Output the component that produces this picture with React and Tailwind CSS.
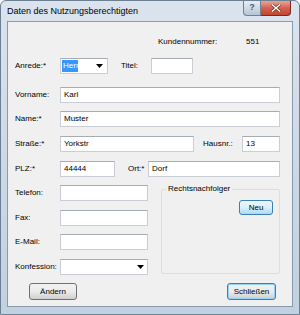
import React from "react";

const font = { fontFamily: '"Liberation Sans", Arial, sans-serif' };

const TextBox = ({ value = "", className = "" }) => (
  <div
    className={`h-[16px] bg-white border border-[#c9ced6] border-t-[#a5acb5] flex items-center pl-[3px] text-[8px] text-black ${className}`}
  >
    {value}
  </div>
);

const Arrow = () => (
  <svg width="7" height="4" viewBox="0 0 7 4" className="shrink-0">
    <path d="M0 0h7L3.5 4z" fill="#000" />
  </svg>
);

const Label = ({ children, className = "w-[45px]" }) => (
  <span className={`text-[8px] text-black shrink-0 ${className}`}>{children}</span>
);

const App = () => {
  return (
    <div
      style={font}
      className="w-[300px] h-[315px] flex flex-col rounded-t-[6px] border border-[#6d7f92] bg-gradient-to-b from-[#dbe4ee] via-[#cdd9e5] to-[#c2d1df] overflow-hidden"
    >
      {/* Titelleiste */}
      <div className="h-[20px] flex items-start shrink-0">
        <span className="text-[9px] text-black mt-[4px] ml-[6px]">
          Daten des Nutzungsberechtigten
        </span>
        <div className="ml-auto mr-[8px] flex">
          <div className="w-[18px] h-[15px] rounded-bl-[4px] border border-t-0 border-[#6f8193] bg-gradient-to-b from-[#e6edf4] via-[#cfdae5] to-[#b4c5d6] flex items-center justify-center text-[9px] font-bold text-[#4b5b6b]">
            ?
          </div>
          <div className="w-[30px] h-[15px] rounded-br-[4px] border border-l-0 border-t-0 border-[#7a2a22] bg-gradient-to-b from-[#e7a597] via-[#d4614f] to-[#c0452f] flex items-center justify-center">
            <svg width="10" height="8" viewBox="0 0 10 8">
              <path d="M1 0.5l8 7M9 0.5l-8 7" stroke="#5a1a12" strokeWidth="2.6" />
              <path d="M1 0.5l8 7M9 0.5l-8 7" stroke="#fff" strokeWidth="1.5" />
            </svg>
          </div>
        </div>
      </div>

      {/* Client-Bereich */}
      <div className="ml-[6px] w-[286px] h-[286px] bg-[#f0f0f0] border border-[#8a9aac] pl-[7px] pr-[12px] pt-[12px] flex flex-col">
        <div className="h-[16px] flex items-center">
          <span className="text-[8px] text-black ml-[143px] w-[88px]">Kundennummer:</span>
          <span className="text-[8px] text-black">551</span>
        </div>

        <div className="h-[16px] mt-[8px] flex items-center">
          <Label>Anrede:*</Label>
          <div className="w-[48px] h-[16px] bg-white border border-[#c9ced6] border-t-[#a5acb5] flex items-center pl-[1px] pr-[4px]">
            <span className="bg-[#3399ff] text-white text-[8px] px-[1px] h-[12px] leading-[12px] w-[16px]">
              Herr
            </span>
            <span className="ml-auto">
              <Arrow />
            </span>
          </div>
          <Label className="ml-[13px] w-[30px]">Titel:</Label>
          <TextBox className="w-[42px]" />
        </div>

        <div className="h-[16px] mt-[13px] flex items-center">
          <Label>Vorname:</Label>
          <TextBox value="Karl" className="flex-1" />
        </div>

        <div className="h-[16px] mt-[8px] flex items-center">
          <Label>Name:*</Label>
          <TextBox value="Muster" className="flex-1" />
        </div>

        <div className="h-[16px] mt-[9px] flex items-center">
          <Label>Straße:*</Label>
          <TextBox value="Yorkstr" className="w-[134px]" />
          <Label className="ml-[9px] w-[39px]">Hausnr.:</Label>
          <TextBox value="13" className="flex-1" />
        </div>

        <div className="h-[16px] mt-[9px] flex items-center">
          <Label>PLZ:*</Label>
          <TextBox value="44444" className="w-[55px]" />
          <Label className="ml-[13px] w-[20px]">Ort:*</Label>
          <TextBox value="Dorf" className="flex-1" />
        </div>

        <div className="mt-[6px] flex items-start">
          <div className="flex flex-col pt-[2px] w-[140px]">
            <div className="h-[16px] flex items-center">
              <Label>Telefon:</Label>
              <TextBox className="w-[88px]" />
            </div>
            <div className="h-[16px] mt-[9px] flex items-center">
              <Label>Fax:</Label>
              <TextBox className="w-[88px]" />
            </div>
            <div className="h-[16px] mt-[8px] flex items-center">
              <Label>E-Mail:</Label>
              <TextBox className="w-[88px]" />
            </div>
            <div className="h-[16px] mt-[9px] flex items-center">
              <Label>Konfession:</Label>
              <div className="w-[88px] h-[16px] bg-white border border-[#c9ced6] border-t-[#a5acb5] flex items-center justify-end pr-[3px]">
                <Arrow />
              </div>
            </div>
          </div>

          <div className="relative flex-1 ml-[6px] mt-[6px] h-[85px] border border-[#d5dfe5] rounded-[2px]">
            <span className="absolute -top-[6px] left-[4px] px-[2px] bg-[#f0f0f0] text-[8px] text-black leading-[10px]">
              Rechtsnachfolger
            </span>
            <div className="flex justify-end pt-[10px] pr-[6px]">
              <button className="w-[34px] h-[15px] rounded-[3px] border border-[#3c7fb1] bg-gradient-to-b from-[#eaf6fd] via-[#d9f0fc] to-[#a7d9f5] text-[8px] text-black">
                Neu
              </button>
            </div>
          </div>
        </div>

        <div className="mt-[8px] flex items-center">
          <button className="ml-[14px] w-[48px] h-[17px] rounded-[3px] border border-[#707070] bg-gradient-to-b from-[#f2f2f2] via-[#ebebeb] to-[#cfcfcf] text-[8px] text-black">
            Ändern
          </button>
          <button className="ml-auto mr-[4px] w-[49px] h-[17px] rounded-[3px] border border-[#3c7fb1] shadow-[inset_0_0_0_1px_#94d3f4] bg-gradient-to-b from-[#f2f2f2] via-[#ebebeb] to-[#cfcfcf] text-[8px] text-black">
            Schließen
          </button>
        </div>
      </div>
    </div>
  );
};

export default App;
